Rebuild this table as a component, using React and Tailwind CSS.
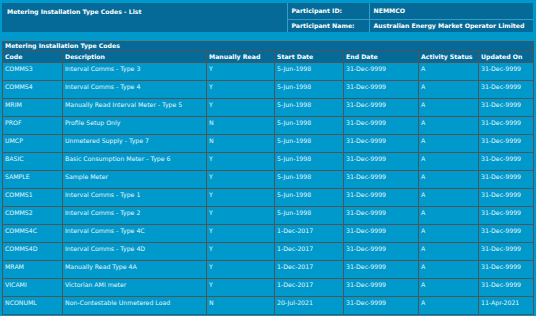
import React from "react";

const rows = [
  ["COMMS3", "Interval Comms - Type 3", "Y", "5-Jun-1998", "31-Dec-9999", "A", "31-Dec-9999"],
  ["COMMS4", "Interval Comms - Type 4", "Y", "5-Jun-1998", "31-Dec-9999", "A", "31-Dec-9999"],
  ["MRIM", "Manually Read Interval Meter - Type 5", "Y", "5-Jun-1998", "31-Dec-9999", "A", "31-Dec-9999"],
  ["PROF", "Profile Setup Only", "N", "5-Jun-1998", "31-Dec-9999", "A", "31-Dec-9999"],
  ["UMCP", "Unmetered Supply - Type 7", "N", "5-Jun-1998", "31-Dec-9999", "A", "31-Dec-9999"],
  ["BASIC", "Basic Consumption Meter - Type 6", "Y", "5-Jun-1998", "31-Dec-9999", "A", "31-Dec-9999"],
  ["SAMPLE", "Sample Meter", "Y", "5-Jun-1998", "31-Dec-9999", "A", "31-Dec-9999"],
  ["COMMS1", "Interval Comms - Type 1", "Y", "5-Jun-1998", "31-Dec-9999", "A", "31-Dec-9999"],
  ["COMMS2", "Interval Comms - Type 2", "Y", "5-Jun-1998", "31-Dec-9999", "A", "31-Dec-9999"],
  ["COMMS4C", "Interval Comms - Type 4C", "Y", "1-Dec-2017", "31-Dec-9999", "A", "31-Dec-9999"],
  ["COMMS4D", "Interval Comms - Type 4D", "Y", "1-Dec-2017", "31-Dec-9999", "A", "31-Dec-9999"],
  ["MRAM", "Manually Read Type 4A", "Y", "1-Dec-2017", "31-Dec-9999", "A", "31-Dec-9999"],
  ["VICAMI", "Victorian AMI meter", "Y", "1-Dec-2017", "31-Dec-9999", "A", "31-Dec-9999"],
  ["NCONUML", "Non-Contestable Unmetered Load", "N", "20-Jul-2021", "31-Dec-9999", "A", "11-Apr-2021"],
];

const heads = ["Code", "Description", "Manually Read", "Start Date", "End Date", "Activity Status", "Updated On"];

export default function App() {
  return (
    <div
      className="w-[536px] h-[316px] overflow-hidden bg-[#0099cc] text-white pt-[3px] px-[2px]"
      style={{ fontFamily: '"DejaVu Sans", Verdana, sans-serif' }}
    >
      <table className="w-[531px] table-fixed border-collapse text-[6.2px] font-bold leading-none">
        <colgroup>
          <col className="w-[285px]" />
          <col className="w-[82px]" />
          <col />
        </colgroup>
        <tbody>
          <tr className="h-[16px]">
            <td rowSpan={2} className="align-top bg-[#066a99] pl-[5px] pt-[6px] whitespace-nowrap">
              Metering Installation Type Codes - List
            </td>
            <td className="bg-[#066a99] border-l border-b border-[#2f9fcc] pl-[4px] whitespace-nowrap">Participant ID:</td>
            <td className="bg-[#066a99] border-l border-b border-[#2f9fcc] pl-[4px] whitespace-nowrap">NEMMCO</td>
          </tr>
          <tr className="h-[13px]">
            <td className="bg-[#066a99] border-l border-[#2f9fcc] pl-[4px] whitespace-nowrap">Participant Name:</td>
            <td className="bg-[#066a99] border-l border-[#2f9fcc] pl-[4px] whitespace-nowrap">Australian Energy Market Operator Limited</td>
          </tr>
        </tbody>
      </table>

      <table className="mt-[9px] w-[532px] table-fixed border-collapse border border-[#4f5458] text-[6.2px] leading-none">
        <colgroup>
          <col className="w-[60px]" />
          <col className="w-[144px]" />
          <col className="w-[68px]" />
          <col className="w-[69px]" />
          <col className="w-[75px]" />
          <col className="w-[60px]" />
          <col />
        </colgroup>
        <thead>
          <tr className="h-[10px]">
            <th colSpan={7} className="bg-[#066a99] border border-[#4f5458] text-left font-bold pl-[2px] align-middle whitespace-nowrap">
              Metering Installation Type Codes
            </th>
          </tr>
          <tr className="h-[11px]">
            {heads.map((h) => (
              <th key={h} className="bg-[#066a99] border border-[#4f5458] text-left font-bold pl-[2px] align-middle whitespace-nowrap">
                {h}
              </th>
            ))}
          </tr>
        </thead>
        <tbody>
          {rows.map((r) => (
            <tr key={r[0]} className="h-[18px]">
              {r.map((c, i) => (
                <td key={i} className="border border-[#4f5458] align-top pl-[2px] pt-[3px] text-[#e6f4fb] whitespace-nowrap">
                  {c}
                </td>
              ))}
            </tr>
          ))}
        </tbody>
      </table>
    </div>
  );
}
